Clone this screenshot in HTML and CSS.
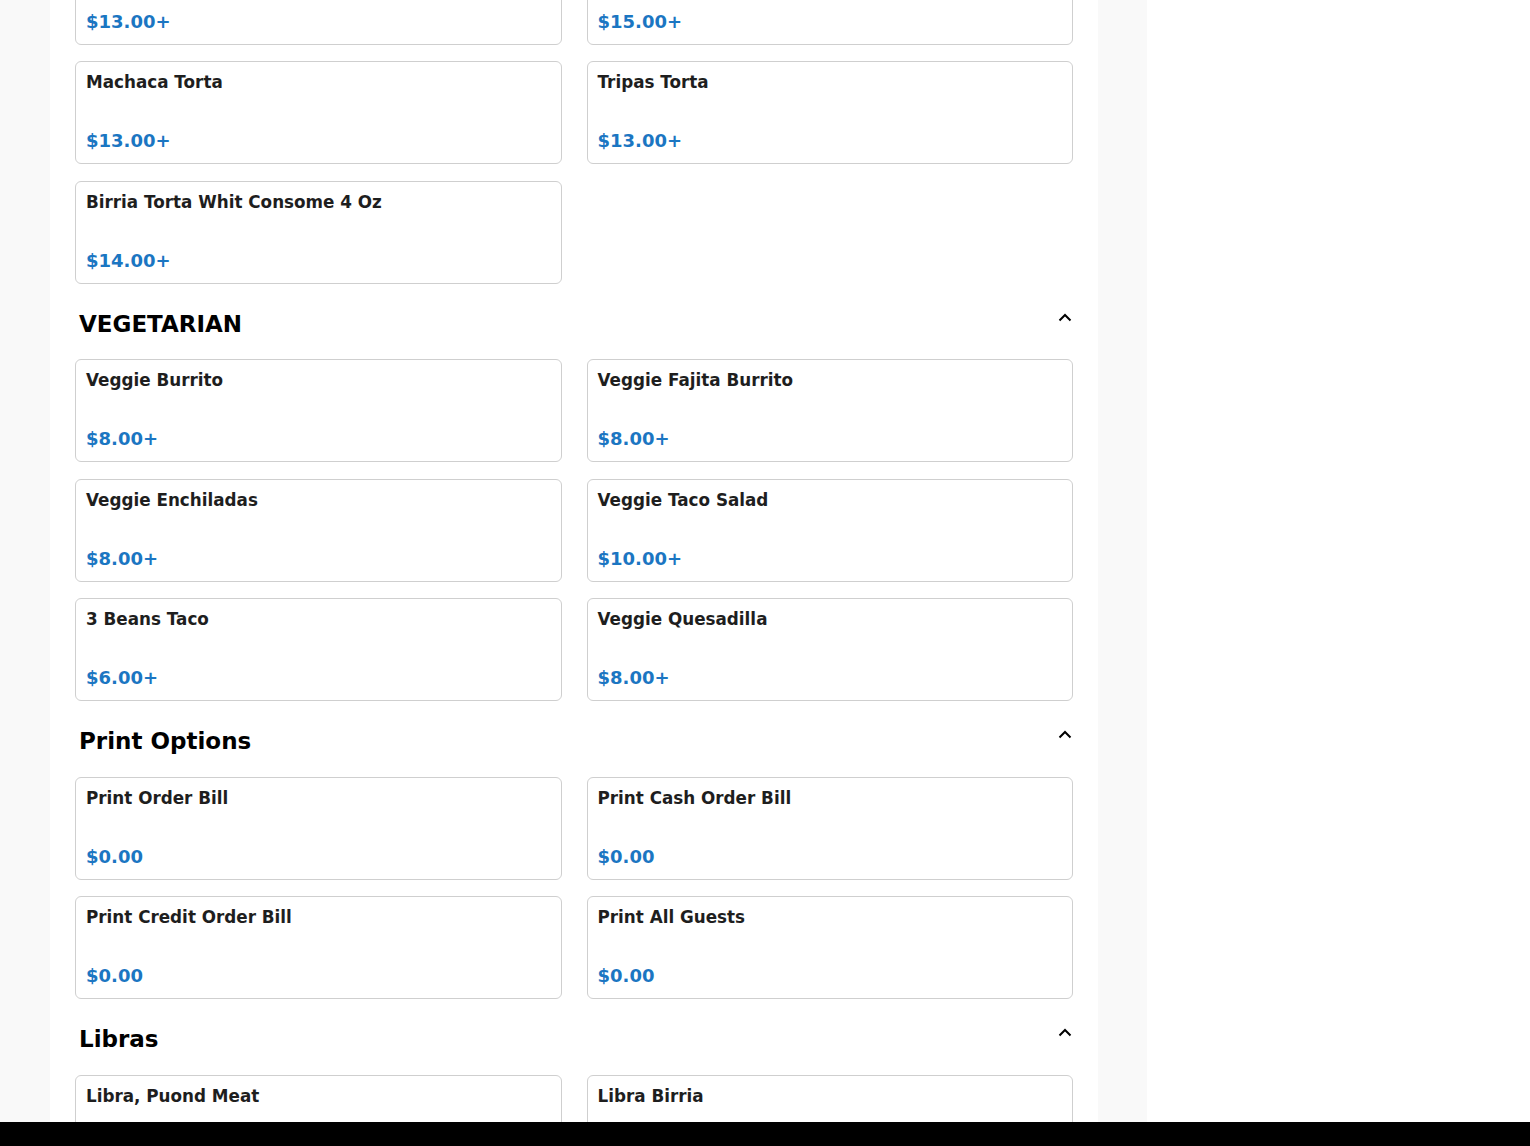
FILE: index.html
```html
<!DOCTYPE html>
<html lang="en">
<head>
    <meta charset="UTF-8">
    <meta name="viewport" content="width=device-width, initial-scale=1.0">
    <title>Menu</title>
    <link rel="stylesheet" href="styles.css">
</head>
<body>
    <div id="page">
        <div id="menu">
            <!-- Tortas (scrolled) -->
            <div class="item-grid first-grid">
                <div class="item-card"><div class="item-name">Asada Torta</div><div class="item-price">$13.00+</div></div>
                <div class="item-card"><div class="item-name">Cubana Torta</div><div class="item-price">$15.00+</div></div>
                <div class="item-card"><div class="item-name">Machaca Torta</div><div class="item-price">$13.00+</div></div>
                <div class="item-card"><div class="item-name">Tripas Torta</div><div class="item-price">$13.00+</div></div>
                <div class="item-card"><div class="item-name">Birria Torta Whit Consome 4 Oz</div><div class="item-price">$14.00+</div></div>
            </div>

            <!-- Vegetarian -->
            <div class="section-head">
                <h2>VEGETARIAN</h2>
                <svg class="chevron" width="16" height="10" viewBox="0 0 16 10"><path d="M2.5 8.5 L8 3 L13.5 8.5" fill="none" stroke="#000" stroke-width="2"/></svg>
            </div>
            <div class="item-grid">
                <div class="item-card"><div class="item-name">Veggie Burrito</div><div class="item-price">$8.00+</div></div>
                <div class="item-card"><div class="item-name">Veggie Fajita Burrito</div><div class="item-price">$8.00+</div></div>
                <div class="item-card"><div class="item-name">Veggie Enchiladas</div><div class="item-price">$8.00+</div></div>
                <div class="item-card"><div class="item-name">Veggie Taco Salad</div><div class="item-price">$10.00+</div></div>
                <div class="item-card"><div class="item-name">3 Beans Taco</div><div class="item-price">$6.00+</div></div>
                <div class="item-card"><div class="item-name">Veggie Quesadilla</div><div class="item-price">$8.00+</div></div>
            </div>

            <!-- Print Options -->
            <div class="section-head">
                <h2>Print Options</h2>
                <svg class="chevron" width="16" height="10" viewBox="0 0 16 10"><path d="M2.5 8.5 L8 3 L13.5 8.5" fill="none" stroke="#000" stroke-width="2"/></svg>
            </div>
            <div class="item-grid">
                <div class="item-card"><div class="item-name">Print Order Bill</div><div class="item-price">$0.00</div></div>
                <div class="item-card"><div class="item-name">Print Cash Order Bill</div><div class="item-price">$0.00</div></div>
                <div class="item-card"><div class="item-name">Print Credit Order Bill</div><div class="item-price">$0.00</div></div>
                <div class="item-card"><div class="item-name">Print All Guests</div><div class="item-price">$0.00</div></div>
            </div>

            <!-- Libras -->
            <div class="section-head">
                <h2>Libras</h2>
                <svg class="chevron" width="16" height="10" viewBox="0 0 16 10"><path d="M2.5 8.5 L8 3 L13.5 8.5" fill="none" stroke="#000" stroke-width="2"/></svg>
            </div>
            <div class="item-grid">
                <div class="item-card"><div class="item-name">Libra, Puond Meat</div><div class="item-price">$0.00+</div></div>
                <div class="item-card"><div class="item-name">Libra Birria</div><div class="item-price">$0.00+</div></div>
            </div>
        </div>

        <div id="order-panel"></div>
    </div>

    <div id="bottom-bar"></div>
</body>
</html>
```

FILE: styles.css
```css
body {
    font-family: "DejaVu Sans", sans-serif;
    margin: 0;
    padding: 0;
    background: #f9f9f9;
    color: #1e1e1e;
    overflow: hidden;
    height: 1146px;
}
#page {
    display: flex;
    gap: 49px;
    padding-left: 50px;
    height: 100%;
}
#menu {
    width: 1048px;
    flex: none;
    box-sizing: border-box;
    padding: 0 25px;
    background: #fff;
}
#order-panel {
    flex: 1;
    background: #fff;
}
.item-grid {
    display: grid;
    grid-template-columns: 1fr 1fr;
    column-gap: 25px;
    row-gap: 16.5px;
}
.first-grid {
    margin-top: -58.5px;
}
.item-card {
    height: 103px;
    box-sizing: border-box;
    border: 1px solid #cfcfcf;
    border-radius: 6px;
    padding: 10px 10px 12px;
    display: flex;
    flex-direction: column;
    justify-content: space-between;
}
.item-name {
    font-size: 16.8px;
    font-weight: bold;
    line-height: 20px;
    color: #1e1e1e;
}
.item-price {
    font-size: 18px;
    font-weight: bold;
    line-height: 21px;
    color: #1b76c2;
}
.section-head {
    display: flex;
    justify-content: space-between;
    align-items: flex-start;
    margin: 27px 0 21.5px;
    padding: 0 0 0 4px;
}
.section-head h2 {
    margin: 0;
    font-size: 23px;
    line-height: 27px;
    font-weight: bold;
    color: #000;
}
.chevron {
    margin-top: 1px;
}
#bottom-bar {
    position: fixed;
    left: 0;
    right: 0;
    bottom: 0;
    height: 24px;
    background: #000;
}
```
